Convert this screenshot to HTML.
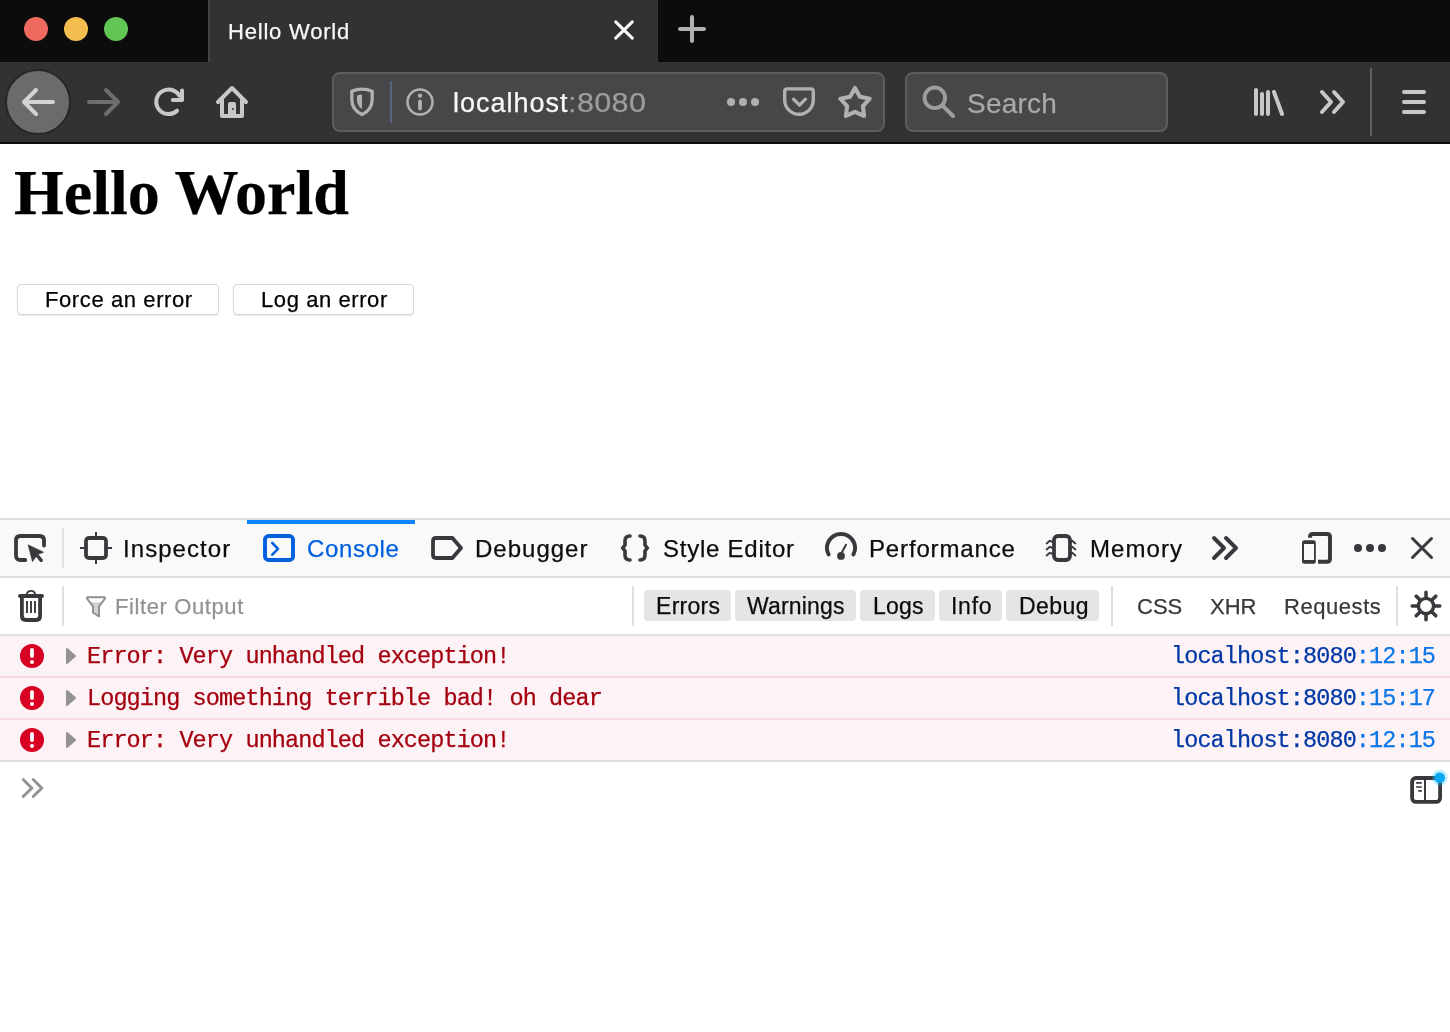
<!DOCTYPE html>
<html><head><meta charset="utf-8">
<style>
*{margin:0;padding:0;box-sizing:border-box}
html,body{width:1450px;height:1032px;overflow:hidden;background:#fff;font-family:"Liberation Sans",sans-serif}
.a{position:absolute}
.t{position:absolute;white-space:nowrap;line-height:1;will-change:transform;-webkit-text-stroke:0.25px currentColor}
svg{position:absolute;overflow:visible}
</style></head><body>
<!-- tab strip -->
<div class="a" style="left:0;top:0;width:1450px;height:62px;background:#0c0c0d"></div>
<div class="a" style="left:24px;top:17px;width:24px;height:24px;border-radius:50%;background:#ee6a5f"></div>
<div class="a" style="left:64px;top:17px;width:24px;height:24px;border-radius:50%;background:#f5bf4f"></div>
<div class="a" style="left:104px;top:17px;width:24px;height:24px;border-radius:50%;background:#62c655"></div>
<div class="a" style="left:208px;top:0;width:450px;height:62px;background:#323234"></div>
<div class="a" style="left:208px;top:0;width:2px;height:62px;background:#454547"></div>
<div class="t" style="left:228px;top:20.5px;font-size:22px;letter-spacing:0.8px;color:#f9f9fa">Hello World</div>
<svg style="left:0;top:0" width="1450" height="62">
 <path d="M615.7 21.9 L632.3 38.1 M632.3 21.9 L615.7 38.1" stroke="#f9f9fa" stroke-width="3" stroke-linecap="round"/>
 <path d="M692 17 V41 M680 29 H704" stroke="#b1b1b3" stroke-width="4" stroke-linecap="round"/>
</svg>
<!-- nav bar -->
<div class="a" style="left:0;top:62px;width:1450px;height:80px;background:#323234"></div>
<div class="a" style="left:0;top:142px;width:1450px;height:2px;background:#0c0c0d"></div>
<div class="a" style="left:5px;top:68.5px;width:66px;height:66px;border-radius:50%;background:#6b6b6c;border:2px solid #262627"></div>
<svg style="left:0;top:62px" width="1450" height="80">
 <g fill="none" stroke-linecap="round" stroke-linejoin="round" stroke-width="4">
  <path d="M24 40 H53 M36 28 L24 40 L36 52" stroke="#d4d4d5"/>
  <path d="M89 40 H118 M106 28 L118 40 L106 52" stroke="#6e6e70"/>
  <path d="M177 48.7 A12.3 12.3 0 1 1 179.2 33.6" stroke="#c8c8c9"/>
  <path d="M182 28.4 V38 H172.8" stroke="#c8c8c9"/>
  <path d="M218 40 L232 26 L246 40 M222 36 V54 H242 V36 M230 54 V42 H234 V54" stroke="#c8c8c9"/>
 </g>
 <circle cx="232.8" cy="46.9" r="1" fill="#323234"/>
</svg>
<!-- url bar -->
<div class="a" style="left:332px;top:72px;width:553px;height:60px;border-radius:8px;background:#474749;border:2px solid #5d5d5f"></div>
<div class="a" style="left:390px;top:81px;width:2px;height:42px;background:#56647c"></div>
<div class="t" style="left:453px;top:90px;font-size:27px;letter-spacing:1.0px;color:#f9f9fa">localhost<span style="color:#9d9d9f">:<span style="display:inline-block;transform:scaleX(1.13);transform-origin:0 0;letter-spacing:0.3px">8080</span></span></div>
<svg style="left:0;top:62px" width="1450" height="80">
 <g fill="none" stroke="#b1b1b3" stroke-width="3.5" stroke-linecap="round" stroke-linejoin="round">
  <path d="M362 27.2 Q356.5 27.2 351.8 29.2 V37.5 Q352 48 362 52.6 Q372 48 372.2 37.5 V29.2 Q367.5 27.2 362 27.2 Z" stroke-width="3.3"/>
  <circle cx="420" cy="40" r="12.5" stroke-width="2.5"/>
  <path d="M787.2 26.9 H810.8 Q813.3 26.9 813.3 29.4 V38 A14.3 14.3 0 0 1 784.7 38 V29.4 Q784.7 26.9 787.2 26.9 Z" stroke-width="3.4"/>
  <path d="M793.5 37.2 L799.5 43.2 L805.5 37.2" stroke-width="3.3"/>
  <path d="M855 26 L859.9 34.77 L869.7 36.7 L862.9 44.04 L864.1 54 L855 49.78 L845.9 54 L847.1 44.04 L840.3 36.7 L850.1 34.77 Z" stroke-width="4.1"/>
 </g>
 <path d="M362 32.5 Q359 32.5 357 33.5 V39 Q357.5 44 362 47 Z" fill="#b1b1b3"/>
 <circle cx="420" cy="33.6" r="2.2" fill="#b1b1b3"/>
 <path d="M420 39.5 V46.5" stroke="#b1b1b3" stroke-width="3.8" stroke-linecap="round"/>
 <circle cx="731" cy="40" r="4" fill="#b1b1b3"/>
 <circle cx="743" cy="40" r="4" fill="#b1b1b3"/>
 <circle cx="755" cy="40" r="4" fill="#b1b1b3"/>
</svg>
<!-- search -->
<div class="a" style="left:905px;top:72px;width:263px;height:60px;border-radius:8px;background:#474749;border:2px solid #5d5d5f"></div>
<svg style="left:0;top:62px" width="1450" height="80">
 <g fill="none" stroke="#9d9d9f" stroke-width="3.9" stroke-linecap="round">
  <circle cx="934.8" cy="35.8" r="10.3"/>
  <path d="M942.6 43.6 L953 54"/>
 </g>
 <g fill="none" stroke="#c8c8c9" stroke-width="4" stroke-linecap="round" stroke-linejoin="round">
  <path d="M1256 28 V52 M1262 32 V52 M1268 30 V52 M1274 30 L1282 52"/>
  <path d="M1322 30 L1331 40 L1322 50 M1334 30 L1343 40 L1334 50"/>
  <path d="M1404 30 H1424 M1404 40 H1424 M1404 50 H1424"/>
 </g>
 <rect x="1370" y="6" width="2" height="68" fill="#606062"/>
</svg>
<div class="t" style="left:967px;top:90px;font-size:28px;letter-spacing:0.2px;color:#a9a9ab">Search</div>

<!-- page -->
<div class="t" style="left:14px;top:161px;font-family:'Liberation Serif',serif;font-weight:bold;font-size:64px;color:#000">Hello World</div>
<div class="a" style="left:17px;top:284px;width:202px;height:31px;border:1px solid #d9d9d9;border-radius:4px;background:#fff;box-shadow:0 1px 1px rgba(0,0,0,.10)"></div>
<div class="t" style="left:45px;top:289px;font-size:22px;letter-spacing:0.6px;color:#000">Force an error</div>
<div class="a" style="left:233px;top:284px;width:181px;height:31px;border:1px solid #d9d9d9;border-radius:4px;background:#fff;box-shadow:0 1px 1px rgba(0,0,0,.10)"></div>
<div class="t" style="left:261px;top:289px;font-size:22px;letter-spacing:0.58px;color:#000">Log an error</div>

<!-- devtools -->
<div class="a" style="left:0;top:518px;width:1450px;height:2px;background:#e0e0e2"></div>
<div class="a" style="left:0;top:520px;width:1450px;height:56px;background:#f9f9fa"></div>
<div class="a" style="left:0;top:576px;width:1450px;height:2px;background:#e0e0e2"></div>
<div class="a" style="left:0;top:578px;width:1450px;height:56px;background:#fff"></div>
<div class="a" style="left:0;top:634px;width:1450px;height:2px;background:#e0e0e2"></div>
<div class="a" style="left:247px;top:520px;width:168px;height:4px;background:#0a84ff"></div>
<div class="a" style="left:62px;top:528px;width:2px;height:40px;background:#e0e0e2"></div>

<div class="t" style="left:123px;top:537px;font-size:24px;letter-spacing:1.06px;color:#0c0c0d">Inspector</div>
<div class="t" style="left:307px;top:537px;font-size:24px;letter-spacing:0.65px;color:#0060df">Console</div>
<div class="t" style="left:475px;top:537px;font-size:24px;letter-spacing:1.0px;color:#0c0c0d">Debugger</div>
<div class="t" style="left:663px;top:537px;font-size:24px;letter-spacing:0.76px;color:#0c0c0d">Style Editor</div>
<div class="t" style="left:869px;top:537px;font-size:24px;letter-spacing:0.85px;color:#0c0c0d">Performance</div>
<div class="t" style="left:1090px;top:537px;font-size:24px;letter-spacing:1.05px;color:#0c0c0d">Memory</div>

<svg style="left:0;top:0" width="1450" height="1032">
 <g fill="none" stroke="#38383d" stroke-width="3.8" stroke-linecap="round" stroke-linejoin="round">
  <path d="M25.3 560 H20.5 Q16 560 16 555.5 V540.5 Q16 536 20.5 536 H39.5 Q44 536 44 540.5 V545.6"/>
  <rect x="86" y="538" width="20" height="20" rx="3"/>
  <path d="M436 538 H452.4 L461 548 L452.4 558 H436 Q433 558 433 555 V541 Q433 538 436 538 Z"/>
  <path d="M630 536 Q625 536 625 541 V545 L622.8 548 L625 551 V555 Q625 560 630 560 M640 536 Q645 536 645 541 V545 L647.2 548 L645 551 V555 Q645 560 640 560" stroke-width="3.6" stroke-linejoin="miter"/>
  <path d="M828.6 554.4 A14 14 0 1 1 853.4 554.4" stroke-width="4"/>
  <rect x="1054" y="536" width="16" height="24" rx="4"/>
  <path d="M1214 538 L1224 548 L1214 558 M1226 538 L1236 548 L1226 558" stroke-width="3.9"/>
  <path d="M1412.5 538.5 L1431.5 557.5 M1431.5 538.5 L1412.5 557.5" stroke-width="3"/>
 </g>
 <g fill="none" stroke="#38383d" stroke-width="2" stroke-linecap="butt">
  <path d="M96 532 V536.5 M96 559.5 V564 M80 548 H84.5 M107.5 548 H112"/>
  <path d="M841 554 L846 544.7" stroke-linecap="round"/>
  <path d="M1046.6 543.4 L1049.8 540.8 L1053 542 M1046.6 549.4 L1049.8 546.8 L1053 548 M1046.6 555.4 L1049.8 552.8 L1053 554 M1075.4 543.4 L1072.2 540.8 L1069 542 M1075.4 549.4 L1072.2 546.8 L1069 548 M1075.4 555.4 L1072.2 552.8 L1069 554" stroke-width="1.9" stroke-linecap="round" stroke-linejoin="round"/>
 </g>
 <path d="M28.2 544.9 L43.5 552.2 L37.5 554.4 L32.5 561.5 Z" fill="#38383d" stroke="#38383d" stroke-width="0.8" stroke-linejoin="round"/>
 <path d="M36 554 L41.2 560.4" stroke="#38383d" stroke-width="3.4" stroke-linecap="round"/>
 <circle cx="841" cy="555.9" r="3.9" fill="#38383d"/>
 <rect x="265" y="536" width="28" height="24" rx="3.5" fill="none" stroke="#0060df" stroke-width="3.9"/>
 <path d="M272.3 543 L278 548.9 L272.3 554.7" fill="none" stroke="#0060df" stroke-width="2.6" stroke-linecap="round" stroke-linejoin="round"/>
 <path d="M1310 537.7 V537 Q1310 534 1313 534 H1327 Q1330 534 1330 537 V558.8 Q1330 561.8 1327 561.8 H1318" fill="none" stroke="#38383d" stroke-width="3.9"/>
 <path fill-rule="evenodd" fill="#38383d" d="M1304.5 540.2 H1313.3 Q1315.8 540.2 1315.8 542.7 V561.2 Q1315.8 563.7 1313.3 563.7 H1304.5 Q1302 563.7 1302 561.2 V542.7 Q1302 540.2 1304.5 540.2 Z M1304 543.9 V560 H1314 V543.9 Z"/>
 <circle cx="1358" cy="548" r="4" fill="#38383d"/>
 <circle cx="1370" cy="548" r="4" fill="#38383d"/>
 <circle cx="1382" cy="548" r="4" fill="#38383d"/>
</svg>

<!-- console toolbar -->
<div class="a" style="left:62px;top:586px;width:2px;height:40px;background:#e0e0e2"></div>
<svg style="left:0;top:0" width="1450" height="1032">
 <g fill="none" stroke="#38383d" stroke-linejoin="round" stroke-linecap="round">
  <path d="M20 596 H42" stroke-width="3.9"/>
  <path d="M21.9 597 V616 Q21.9 620 26 620 H36 Q40.1 620 40.1 616 V597" stroke-width="3.8" stroke-linecap="butt"/>
  <path d="M26.6 594.5 Q27.5 590.8 31 590.8 Q34.5 590.8 35.4 594.5" stroke-width="1.8"/>
  <path d="M27 601 V613 M31 601 V613 M35 601 V613" stroke-width="1.9" stroke-linecap="butt"/>
 </g>
 <path d="M90.8 602.2 H101.2 L99 606.3 V616.4 L93 612.8 V606.3 Z" fill="#d4d4d6"/>
 <path d="M87.5 597.3 H104.5 Q105.5 597.5 104.8 598.8 L99 606.3 V616.4 L93 612.8 V606.3 L87.2 598.8 Q86.5 597.5 87.5 597.3 Z" fill="none" stroke="#8f8f91" stroke-width="1.9" stroke-linejoin="round"/>
</svg>
<div class="t" style="left:115px;top:596px;font-size:22px;letter-spacing:0.6px;color:#929294">Filter Output</div>
<div class="a" style="left:632px;top:586px;width:2px;height:40px;background:#e0e0e2"></div>
<div class="a" style="left:644px;top:590px;width:87px;height:31px;border-radius:4px;background:#e5e5e6"></div>
<div class="a" style="left:735px;top:590px;width:121px;height:31px;border-radius:4px;background:#e5e5e6"></div>
<div class="a" style="left:860px;top:590px;width:75px;height:31px;border-radius:4px;background:#e5e5e6"></div>
<div class="a" style="left:939px;top:590px;width:63px;height:31px;border-radius:4px;background:#e5e5e6"></div>
<div class="a" style="left:1006px;top:590px;width:93px;height:31px;border-radius:4px;background:#e5e5e6"></div>
<div class="t" style="left:656px;top:595px;font-size:23px;letter-spacing:0.29px;color:#0c0c0d">Errors</div>
<div class="t" style="left:747px;top:595px;font-size:23px;letter-spacing:0.16px;color:#0c0c0d">Warnings</div>
<div class="t" style="left:873px;top:595px;font-size:23px;letter-spacing:0.17px;color:#0c0c0d">Logs</div>
<div class="t" style="left:951px;top:595px;font-size:23px;letter-spacing:0.73px;color:#0c0c0d">Info</div>
<div class="t" style="left:1019px;top:595px;font-size:23px;letter-spacing:0.45px;color:#0c0c0d">Debug</div>
<div class="a" style="left:1111px;top:586px;width:2px;height:40px;background:#e0e0e2"></div>
<div class="t" style="left:1137px;top:596px;font-size:22px;color:#38383d">CSS</div>
<div class="t" style="left:1210px;top:596px;font-size:22px;color:#38383d">XHR</div>
<div class="t" style="left:1284px;top:596px;font-size:22px;letter-spacing:0.55px;color:#38383d">Requests</div>
<div class="a" style="left:1396px;top:586px;width:2px;height:40px;background:#e0e0e2"></div>
<svg style="left:0;top:0" width="1450" height="1032">
 <g stroke="#38383d" stroke-width="3.5" stroke-linecap="round">
  <path d="M1426 592.2 V597 M1426 615 V619.8 M1412.2 606 H1417 M1435 606 H1439.8 M1416.2 596.2 L1419.6 599.6 M1432.4 612.4 L1435.8 615.8 M1435.8 596.2 L1432.4 599.6 M1419.6 612.4 L1416.2 615.8"/>
 </g>
 <circle cx="1426" cy="606" r="7.6" fill="none" stroke="#38383d" stroke-width="3.4"/>
</svg>

<!-- messages -->
<div class="a" style="left:0;top:636px;width:1450px;height:40px;background:#fdf2f5"></div>
<div class="a" style="left:0;top:676px;width:1450px;height:2px;background:#f8d9df"></div>
<div class="a" style="left:0;top:678px;width:1450px;height:40px;background:#fdf2f5"></div>
<div class="a" style="left:0;top:718px;width:1450px;height:2px;background:#f8d9df"></div>
<div class="a" style="left:0;top:720px;width:1450px;height:40px;background:#fdf2f5"></div>
<div class="a" style="left:0;top:760px;width:1450px;height:2px;background:#e0e0e2"></div>

<svg style="left:0;top:0" width="1450" height="1032">
 <g id="err">
  <circle cx="32" cy="656" r="12" fill="#d70022"/>
  <path d="M32 650 V656" stroke="#fff" stroke-width="3.8" stroke-linecap="round"/>
  <circle cx="32" cy="662" r="2" fill="#fff"/>
  <path d="M67 649 L75 656 L67 663 Z" fill="#939395" stroke="#939395" stroke-width="2" stroke-linejoin="round"/>
 </g>
 <use href="#err" y="42"/>
 <use href="#err" y="84"/>
 <path d="M23.2 779.5 L31.8 788.1 L23.2 796.5 M33.2 779.5 L41.8 788.1 L33.2 796.5" fill="none" stroke="#939395" stroke-width="2.9" stroke-linecap="round" stroke-linejoin="round"/>
 <rect x="1412.1" y="778" width="28" height="23.9" rx="3.8" fill="none" stroke="#38383d" stroke-width="3.8"/>
 <path d="M1425 779 V801" stroke="#38383d" stroke-width="2"/>
 <path d="M1416.1 782.9 H1421.8 M1416.1 787 H1421.8 M1418.3 790.9 H1421.8" stroke="#38383d" stroke-width="1.6"/>
 <circle cx="1439.7" cy="777.7" r="7.9" fill="rgba(20,190,255,0.28)"/>
 <circle cx="1439.7" cy="777.7" r="5.3" fill="#08a7f3"/>
</svg>

<div class="t" style="left:87px;top:645px;font-family:'Liberation Mono',monospace;font-size:23.5px;letter-spacing:-0.9px;color:#a4000f">Error: Very unhandled exception!</div>
<div class="t" style="left:87px;top:687px;font-family:'Liberation Mono',monospace;font-size:23.5px;letter-spacing:-0.9px;color:#a4000f">Logging something terrible bad! oh dear</div>
<div class="t" style="left:87px;top:729px;font-family:'Liberation Mono',monospace;font-size:23.5px;letter-spacing:-0.9px;color:#a4000f">Error: Very unhandled exception!</div>
<div class="t" style="left:1171px;top:645px;font-family:'Liberation Mono',monospace;font-size:23.5px;letter-spacing:-0.9px;color:#0039a6">localhost:8080<span style="color:#0a76e8">:12:15</span></div>
<div class="t" style="left:1171px;top:687px;font-family:'Liberation Mono',monospace;font-size:23.5px;letter-spacing:-0.9px;color:#0039a6">localhost:8080<span style="color:#0a76e8">:15:17</span></div>
<div class="t" style="left:1171px;top:729px;font-family:'Liberation Mono',monospace;font-size:23.5px;letter-spacing:-0.9px;color:#0039a6">localhost:8080<span style="color:#0a76e8">:12:15</span></div>
</body></html>
